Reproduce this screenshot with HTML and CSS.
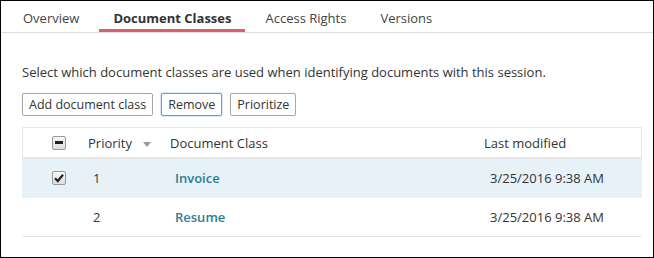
FILE: index.html
```html
<!DOCTYPE html>
<html lang="en">
<head>
    <meta charset="UTF-8">
    <title>Session - Document Classes</title>
    <link rel="stylesheet" href="styles.css">
</head>
<body>
    <div class="page">
        <!-- Tabs -->
        <div class="tabs">
            <div class="tab">Overview</div>
            <div class="tab active">Document Classes</div>
            <div class="tab">Access Rights</div>
            <div class="tab">Versions</div>
        </div>

        <div class="content">
            <p class="intro">Select which document classes are used when identifying documents with this session.</p>

            <div class="toolbar">
                <button>Add document class</button>
                <button class="focused">Remove</button>
                <button>Prioritize</button>
            </div>

            <!-- Class list -->
            <div class="grid">
                <div class="row head">
                    <div class="cell check"><span class="box partial"></span></div>
                    <div class="cell">Priority <span class="sort"></span></div>
                    <div class="cell">Document Class</div>
                    <div class="cell">Last modified</div>
                </div>
                <div class="row selected">
                    <div class="cell check">
                        <span class="box">
                            <svg width="10" height="10" viewBox="0 0 10 10"><path d="M1 5.2 L3.8 8 L9 1.8" fill="none" stroke="#222" stroke-width="2.2"/></svg>
                        </span>
                    </div>
                    <div class="cell num">1</div>
                    <div class="cell name">Invoice</div>
                    <div class="cell date">3/25/2016 9:38 AM</div>
                </div>
                <div class="row">
                    <div class="cell check"></div>
                    <div class="cell num">2</div>
                    <div class="cell name">Resume</div>
                    <div class="cell date">3/25/2016 9:38 AM</div>
                </div>
            </div>
        </div>
    </div>
</body>
</html>
```

FILE: styles.css
```css
html, body {
    margin: 0;
    padding: 0;
    background: #fff;
}
.page {
    width: 654px;
    height: 258px;
    box-sizing: border-box;
    border: 1px solid #000;
    font-family: 'Open Sans', 'Liberation Sans', sans-serif;
    font-size: 13px;
    color: #333;
}
.tabs {
    display: flex;
    padding-left: 8px;
    border-bottom: 1px solid #ddd;
}
.tab {
    padding: 8px 14px 2px;
    line-height: 18px;
    margin-right: 6px;
    color: #444;
    border-bottom: 3px solid transparent;
}
.tab.active {
    font-weight: 700;
    color: #333;
    border-bottom-color: #d9616b;
}
.content {
    padding: 30px 12px 0 21px;
}
.intro {
    margin: 0;
    line-height: 18px;
}
.toolbar {
    display: flex;
    gap: 8px;
    margin-top: 12px;
}
.toolbar button {
    font-family: inherit;
    font-size: 12.5px;
    color: #333;
    background: #fff;
    border: 1px solid #a6a6a6;
    border-radius: 2px;
    padding: 0 6px;
    height: 23px;
    line-height: 20px;
}
.toolbar button.focused {
    border-color: #6b9bdc;
    box-shadow: 0 0 0 1px rgba(107, 155, 220, 0.25);
}
.grid {
    margin-top: 11px;
    width: 620px;
}
.row {
    display: grid;
    grid-template-columns: 58px 82px 314px 166px;
    align-items: center;
    height: 38px;
    border-bottom: 1px solid #e4e4e4;
}
.row.head {
    height: 29px;
    border: 1px solid #e8e8e8;
    border-bottom: 2px solid #e8e8e8;
    grid-template-columns: 57px 82px 314px 165px;
}
.row.selected {
    background: #e6f2f8;
    border-bottom-color: #e6f2f8;
}
.cell {
    padding-left: 8px;
    white-space: nowrap;
}
.cell.check {
    padding-left: 30px;
    display: flex;
    align-items: center;
}
.row.head .cell.check {
    padding-left: 29px;
}
.cell.num {
    padding-left: 13px;
}
.cell.name {
    padding-left: 13px;
    color: #2b7e93;
    font-weight: 600;
}
.cell.date {
    padding-left: 14px;
}
.box {
    width: 12px;
    height: 12px;
    border: 1px solid #999;
    border-radius: 2px;
    background: linear-gradient(#f7f7f7, #dedede);
    display: flex;
    align-items: center;
    justify-content: center;
}
.box.partial::after {
    content: "";
    width: 8px;
    height: 3px;
    background: #222;
}
.sort {
    display: inline-block;
    margin-left: 8px;
    vertical-align: middle;
    width: 0;
    height: 0;
    border-left: 4px solid transparent;
    border-right: 4px solid transparent;
    border-top: 5px solid #999;
}
```
